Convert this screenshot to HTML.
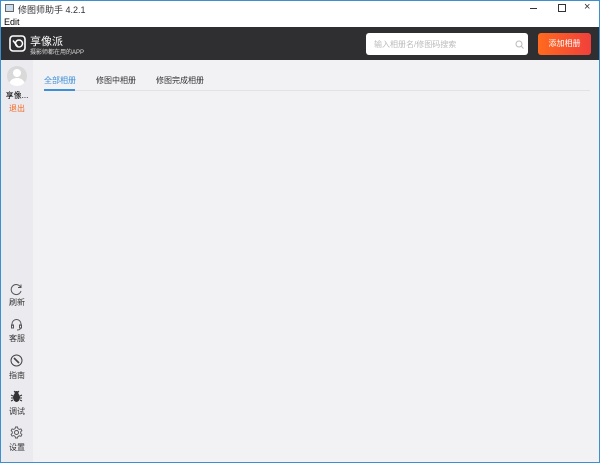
<!DOCTYPE html>
<html><head><meta charset="utf-8"><style>
*{margin:0;padding:0;box-sizing:border-box}
body{width:600px;height:463px;overflow:hidden;font-family:"Liberation Sans","Noto Sans CJK SC",sans-serif;background:#fff;position:relative}
.win{position:absolute;inset:0;border:1px solid #3c8fd0}
.abs{position:absolute}
.t{font-size:9px;color:#000}
.side{position:absolute;left:1px;top:60px;width:32px;height:402px;background:#ebeaef}
.main{position:absolute;left:33px;top:60px;right:1px;bottom:1px;background:#f2f1f4}
.lbl{position:absolute;width:32px;text-align:center;font-size:8px;color:#333}
</style></head><body>
<div class="win"></div>
<div class="abs" style="left:5px;top:4px;width:9px;height:8px;border:1px solid #666;background:#cde"></div>
<div class="abs t" style="left:18px;top:3px;color:#333">修图师助手 4.2.1</div>
<div class="abs" style="left:530px;top:8px;width:7px;height:1px;background:#333"></div>
<div class="abs" style="left:558px;top:4px;width:8px;height:8px;border:1px solid #333"></div>
<div class="abs" style="left:584px;top:1px;font-size:11px;color:#333">×</div>
<div class="abs t" style="left:4px;top:17px">Edit</div>
<div class="abs" style="left:1px;top:27px;width:598px;height:33px;background:#2f2e30"></div>
<svg class="abs" style="left:9px;top:35px" width="17" height="17" viewBox="0 0 17 17"><rect x="1" y="1" width="15" height="15" rx="3" fill="none" stroke="#fff" stroke-width="1.6"/><circle cx="10" cy="8.5" r="3.5" fill="none" stroke="#fff" stroke-width="1.5"/><path d="M4 5.5 L9 12" stroke="#fff" stroke-width="1.5"/></svg>
<div class="abs" style="left:30px;top:33px;font-size:11px;color:#fff">享像派</div>
<div class="abs" style="left:30px;top:47px;font-size:6px;color:#ddd">摄影师都在用的APP</div>
<div class="abs" style="left:366px;top:33px;width:162px;height:22px;background:#fff;border-radius:3px"></div>
<div class="abs" style="left:374px;top:39px;font-size:8px;color:#bbb">输入相册名/修图码搜索</div>
<svg class="abs" style="left:515px;top:40px" width="9" height="9"><circle cx="4" cy="4" r="3" fill="none" stroke="#bbb"/><path d="M6 6L8.5 8.5" stroke="#bbb"/></svg>
<div class="abs" style="left:538px;top:33px;width:53px;height:22px;border-radius:3px;background:linear-gradient(90deg,#ff6a1e,#f0403c);color:#fff;font-size:8px;text-align:center;line-height:22px">添加相册</div>
<div class="side"></div>
<div class="main"></div>
<div class="abs" style="left:7px;top:66px;width:20px;height:20px;border-radius:50%;background:#d9d9d9;overflow:hidden"><div style="position:absolute;left:6px;top:3px;width:8px;height:8px;border-radius:50%;background:#fff"></div><div style="position:absolute;left:2px;top:12px;width:16px;height:14px;border-radius:50%;background:#fff"></div></div>
<div class="lbl" style="left:1px;top:90px;color:#000">享像...</div>
<div class="lbl" style="left:1px;top:103px;color:#f56a24">退出</div>
<div class="abs" style="left:44px;top:75px;font-size:8px;color:#3d8fd8">全部相册</div>
<div class="abs" style="left:96px;top:75px;font-size:8px;color:#333">修图中相册</div>
<div class="abs" style="left:156px;top:75px;font-size:8px;color:#333">修图完成相册</div>
<div class="abs" style="left:44px;top:90px;width:546px;height:1px;background:#e2e1e6"></div>
<div class="abs" style="left:44px;top:89px;width:31px;height:2px;background:#3d8fd8"></div>
<svg class="abs" style="left:10px;top:283px" width="13" height="13" viewBox="0 0 13 13"><path d="M10.5 4A5 5 0 1 0 11 8" fill="none" stroke="#555" stroke-width="1"/><path d="M11 1.5V4.5H8" fill="none" stroke="#555"/></svg>
<div class="lbl" style="left:1px;top:297px">刷新</div>
<svg class="abs" style="left:10px;top:318px" width="13" height="13" viewBox="0 0 13 13"><path d="M2 8V6a4.5 4.5 0 0 1 9 0v2" fill="none" stroke="#555"/><rect x="1.5" y="7" width="2" height="3" fill="none" stroke="#555"/><rect x="9.5" y="7" width="2" height="3" fill="none" stroke="#555"/><path d="M10.5 10.5Q10 12 7 12" fill="none" stroke="#555"/></svg>
<div class="lbl" style="left:1px;top:333px">客服</div>
<svg class="abs" style="left:10px;top:354px" width="13" height="13" viewBox="0 0 13 13"><circle cx="6.5" cy="6.5" r="5.5" fill="none" stroke="#444"/><path d="M4 4L9 9" stroke="#444" stroke-width="1.6"/></svg>
<div class="lbl" style="left:1px;top:370px">指南</div>
<svg class="abs" style="left:10px;top:390px" width="13" height="13" viewBox="0 0 13 13"><ellipse cx="6.5" cy="7.5" rx="3.5" ry="4.5" fill="#333"/><circle cx="6.5" cy="3" r="2" fill="#333"/><path d="M1 5L3 6M1 8H3M1 11L3 10M12 5L10 6M12 8H10M12 11L10 10M4 1L5 2M9 1L8 2" stroke="#333"/></svg>
<div class="lbl" style="left:1px;top:406px">调试</div>
<svg class="abs" style="left:10px;top:426px" width="13" height="13" viewBox="0 0 13 13"><circle cx="6.5" cy="6.5" r="2" fill="none" stroke="#555"/><path d="M5.5 1h2l.4 1.6 1.4.8 1.6-.5 1 1.7-1.2 1.2v1.6l1.2 1.2-1 1.7-1.6-.5-1.4.8L7.5 12h-2l-.4-1.6-1.4-.8-1.6.5-1-1.7L2.3 7.2V5.8L1.1 4.6l1-1.7 1.6.5 1.4-.8z" fill="none" stroke="#555" stroke-width=".9"/></svg>
<div class="lbl" style="left:1px;top:442px">设置</div>
</body></html>
